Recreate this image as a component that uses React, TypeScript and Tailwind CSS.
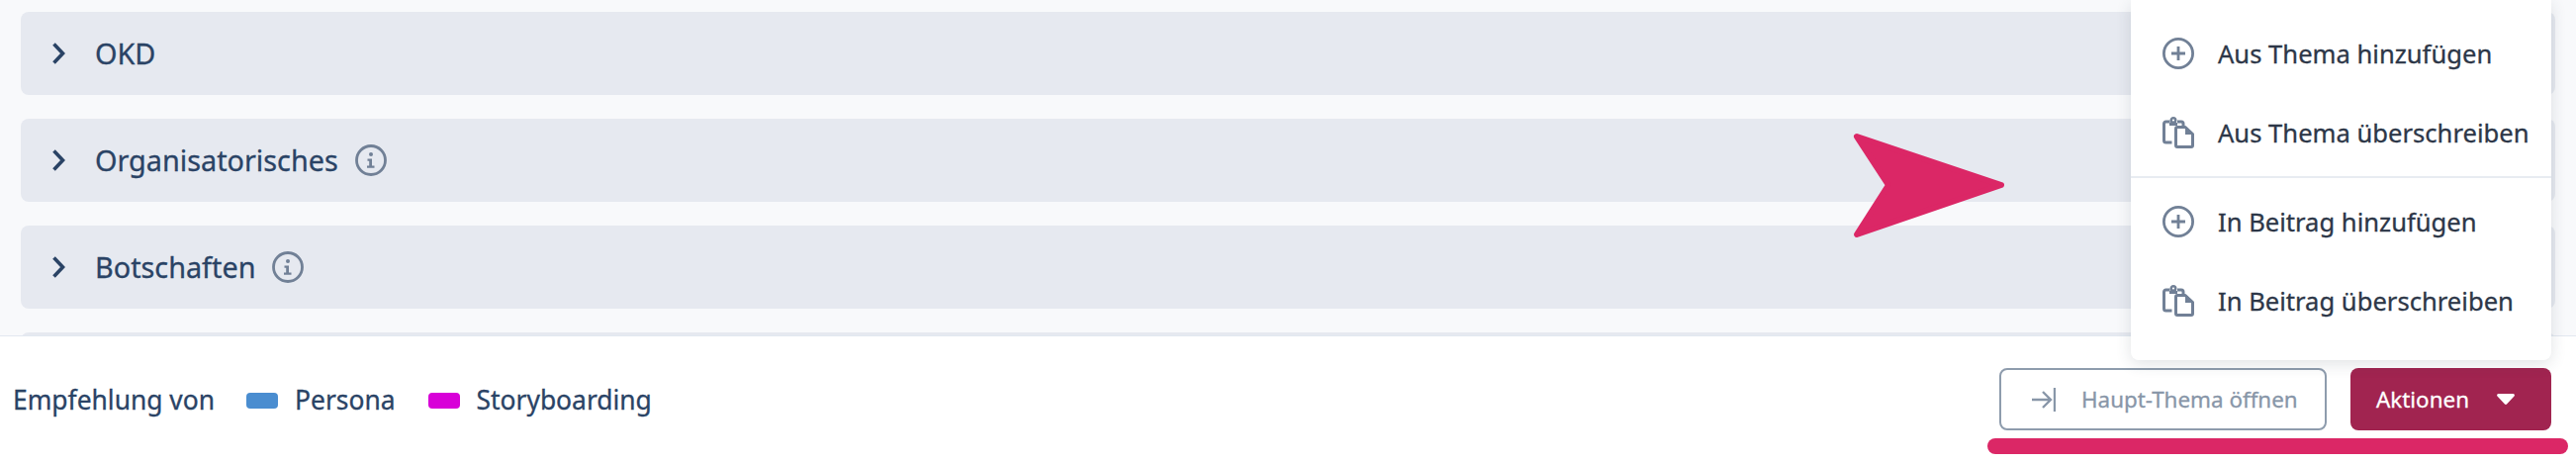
const font = "font-['Noto_Sans',sans-serif]";
const heavy = "[-webkit-text-stroke:0.3px_currentColor]";

function Chevron() {
  return (
    <svg width="16" height="24" viewBox="0 0 16 24" fill="none" className="shrink-0">
      <path d="M3.5 2.5 L12.5 12 L3.5 21.5" stroke="#2a4365" strokeWidth="3.6" />
    </svg>
  );
}

function InfoIcon() {
  return (
    <svg width="32" height="32" viewBox="0 0 32 32" fill="none" className="shrink-0">
      <circle cx="16" cy="16" r="14.5" stroke="#718096" strokeWidth="2.8" />
      <circle cx="16" cy="10" r="2" fill="#718096" />
      <path d="M12.5 14.5h4.5v7h2.5v2.2h-7.5v-2.2h2.2v-4.8h-1.7z" fill="#718096" />
    </svg>
  );
}

function PlusIcon() {
  return (
    <svg width="32" height="32" viewBox="0 0 32 32" fill="none" className="shrink-0">
      <circle cx="16" cy="16" r="14.6" stroke="#718096" strokeWidth="2.8" />
      <path d="M16 9v14M9 16h14" stroke="#718096" strokeWidth="2.8" />
    </svg>
  );
}

function PasteIcon() {
  return (
    <svg width="32" height="32" viewBox="0 0 32 32" fill="none" className="shrink-0">
      <path d="M9.5 26H3.5a2 2 0 0 1-2-2V7a2 2 0 0 1 2-2h4M15 5h4a2 2 0 0 1 2 2v3" stroke="#718096" strokeWidth="3" />
      <circle cx="11" cy="3.5" r="2.3" stroke="#718096" strokeWidth="2.4" />
      <path d="M7 7.5h8" stroke="#718096" strokeWidth="3" />
      <path d="M15 10.5h8l7.5 7v11.5a1.5 1.5 0 0 1-1.5 1.5H15a1.5 1.5 0 0 1-1.5-1.5V12a1.5 1.5 0 0 1 1.5-1.5z" stroke="#718096" strokeWidth="3" strokeLinejoin="round" />
      <path d="M23 11v7h7" fill="#718096" />
    </svg>
  );
}

function Row({ label, info }: { label: string; info?: boolean }) {
  return (
    <div className="flex h-[84px] shrink-0 items-center rounded-lg bg-[#e6e9f0] pl-[30px]">
      <Chevron />
      <span className={`ml-[29px] text-[28.8px] leading-none text-[#2a4365] ${heavy}`}>{label}</span>
      {info && <span className="ml-[17px] flex"><InfoIcon /></span>}
    </div>
  );
}

function MenuItem({ label, icon }: { label: string; icon: React.ReactNode }) {
  return (
    <div className={`flex h-[80px] items-center gap-6 pl-8 text-[25.6px] text-[#2d3748] ${heavy}`}>
      {icon}
      <span className="whitespace-nowrap pt-[3px]">{label}</span>
    </div>
  );
}

export default function App() {
  return (
    <div className={`relative flex h-[468px] w-[2604px] flex-col overflow-hidden bg-white ${font}`}>
      <div className="flex h-[339px] shrink-0 flex-col gap-6 overflow-hidden bg-[#f8f9fb] px-[21px] pt-3">
        <Row label="OKD" />
        <Row label="Organisatorisches" info />
        <Row label="Botschaften" info />
        <Row label="" />
      </div>
      <div className="flex flex-1 items-start justify-between border-t border-[#e2e8f0] pl-[13px] pr-[25px] pt-[32px]">
        <div className={`mt-px flex h-[63px] items-center text-[26.4px] text-[#2a4365] ${heavy}`}>
          <span>Empfehlung von</span>
          <span className="ml-[32px] h-4 w-8 rounded bg-[#4a8dd0]" />
          <span className="ml-[17px]">Persona</span>
          <span className="ml-[33px] h-4 w-8 rounded bg-[#d800d8]" />
          <span className="ml-[17px]">Storyboarding</span>
        </div>
        <div className="flex gap-6">
          <div className={`flex h-[63px] w-[331px] items-center gap-[26px] rounded-lg border-2 border-[#8e9cad] pl-[31px] text-[22.4px] text-[#8896a8] ${heavy}`}>
            <svg width="24" height="26" viewBox="0 0 24 26" fill="none" className="shrink-0">
              <path d="M0 13h18M11 5l8 8-8 8M23 1v24" stroke="#8896a8" strokeWidth="2.4" />
            </svg>
            <span className="whitespace-nowrap pt-px">Haupt-Thema öffnen</span>
          </div>
          <div className={`flex h-[63px] w-[203px] items-center gap-[28px] rounded-lg bg-[#a12450] pl-[26px] text-[22.4px] text-white ${heavy}`}>
            <span className="pt-px">Aktionen</span>
            <svg width="18" height="11" viewBox="0 0 18 11" className="shrink-0"><path d="M1.5 0h15a1.5 1.5 0 0 1 1 2.5L10 10.5a1.5 1.5 0 0 1-2 0L.5 2.5A1.5 1.5 0 0 1 1.5 0z" fill="#fff" /></svg>
          </div>
        </div>
      </div>

      <div className="absolute left-[2154px] top-0 h-[364px] w-[425px] rounded-b-lg bg-white pt-[14px] shadow-[0_4px_16px_rgba(45,55,72,0.14)]">
        <MenuItem label="Aus Thema hinzufügen" icon={<PlusIcon />} />
        <MenuItem label="Aus Thema überschreiben" icon={<PasteIcon />} />
        <div className="my-1 h-0.5 bg-[#e8ecf1]" />
        <MenuItem label="In Beitrag hinzufügen" icon={<PlusIcon />} />
        <MenuItem label="In Beitrag überschreiben" icon={<PasteIcon />} />
      </div>

      <svg className="absolute left-[1870px] top-[130px]" width="160" height="114" viewBox="0 0 160 114">
        <path d="M7 8 L153 57 L7 107 L39 57 Z" fill="#db2766" stroke="#db2766" strokeWidth="6" strokeLinejoin="round" />
      </svg>
      <div className="absolute left-[2009px] top-[443px] h-4 w-[587px] rounded-full bg-[#db2766]" />
    </div>
  );
}
